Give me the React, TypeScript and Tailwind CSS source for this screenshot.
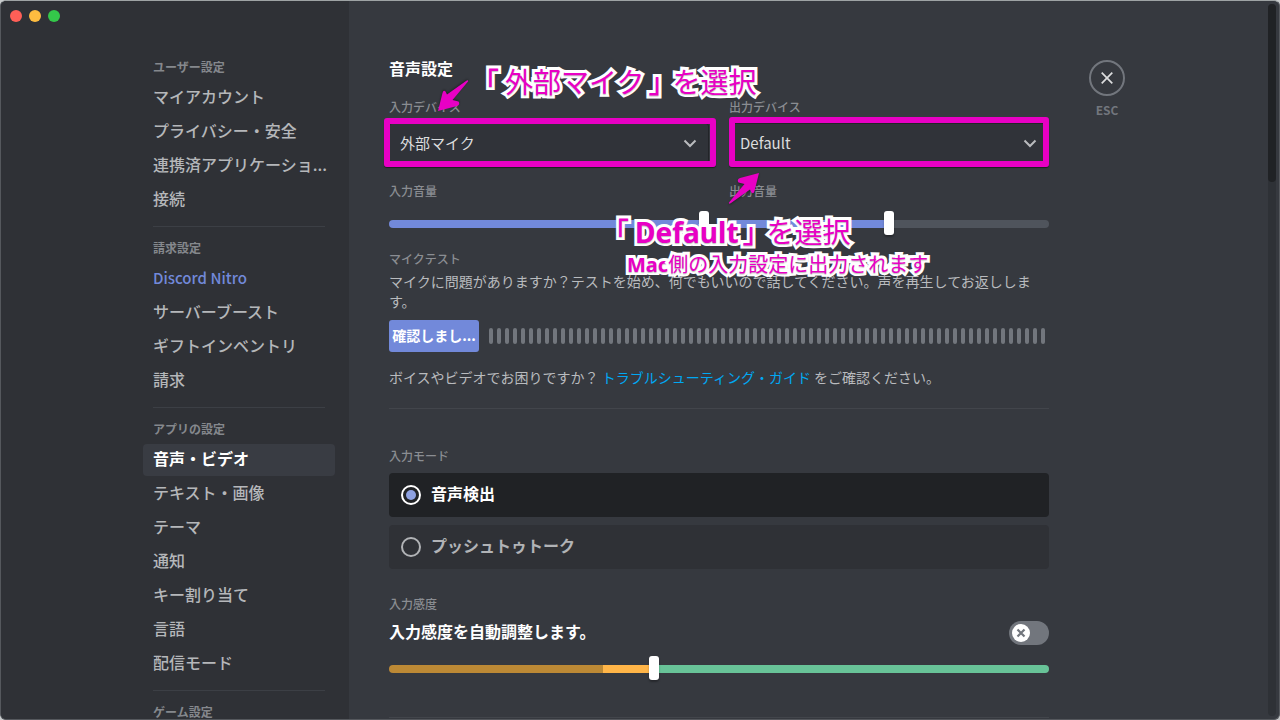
import { useState } from "react";
import type { ReactNode } from "react";

type NavItem = { label: string; accent?: boolean; active?: boolean };
type NavGroup = { title: string; items: NavItem[] };

const groups: NavGroup[] = [
  {
    title: "ユーザー設定",
    items: [
      { label: "マイアカウント" },
      { label: "プライバシー・安全" },
      { label: "連携済アプリケーショ..." },
      { label: "接続" },
    ],
  },
  {
    title: "請求設定",
    items: [
      { label: "Discord Nitro", accent: true },
      { label: "サーバーブースト" },
      { label: "ギフトインベントリ" },
      { label: "請求" },
    ],
  },
  {
    title: "アプリの設定",
    items: [
      { label: "音声・ビデオ", active: true },
      { label: "テキスト・画像" },
      { label: "テーマ" },
      { label: "通知" },
      { label: "キー割り当て" },
      { label: "言語" },
      { label: "配信モード" },
    ],
  },
  { title: "ゲーム設定", items: [] },
];

const sliderBase =
  "block h-6 w-full appearance-none bg-transparent [&::-webkit-slider-runnable-track]:h-2 [&::-webkit-slider-runnable-track]:rounded-full [&::-webkit-slider-thumb]:-mt-[9px] [&::-webkit-slider-thumb]:h-6 [&::-webkit-slider-thumb]:w-[10px] [&::-webkit-slider-thumb]:appearance-none [&::-webkit-slider-thumb]:rounded-[3px] [&::-webkit-slider-thumb]:bg-white [&::-webkit-slider-thumb]:shadow-[0_2px_2px_rgba(0,0,0,0.3)]";

const noteText =
  "pointer-events-none absolute z-20 whitespace-nowrap text-[#e800c4] [-webkit-text-stroke:6px_white] [paint-order:stroke_fill] [stroke-linejoin:round] [text-shadow:0_1px_1px_rgba(0,0,0,0.25)]";

function Label({ children, htmlFor }: { children: ReactNode; htmlFor?: string }) {
  return (
    <label htmlFor={htmlFor} className="block text-xs leading-4 font-medium text-[#8a8d92]">
      {children}
    </label>
  );
}

function Sidebar() {
  return (
    <aside className="flex shrink-0 grow basis-[218px] justify-end bg-[#2f3136]">
      <nav className="w-[206px] pt-[53px] pr-[14px]">
        {groups.map((g, i) => (
          <section key={g.title}>
            {i > 0 && <hr className="mx-[10px] mt-[10px] mb-2 border-[#3c3f45]" />}
            <h2 className="h-7 px-[10px] text-xs leading-[26px] font-bold text-[#85888d]">{g.title}</h2>
            {g.items.map((it) => (
              <a
                key={it.label}
                href="#"
                className={
                  "mb-0.5 block h-8 overflow-hidden rounded px-[10px] whitespace-nowrap " +
                  (it.active
                    ? "bg-[#393c43] text-base leading-[28px] font-bold text-white"
                    : it.accent
                      ? "text-[15px] leading-[30px] font-medium text-[#7289da]"
                      : "text-base leading-[28px] font-medium text-[#b5b7ba]")
                }
              >
                {it.label}
              </a>
            ))}
          </section>
        ))}
      </nav>
    </aside>
  );
}

function Device({ id, label, value, frame }: { id: string; label: string; value: string; frame: string }) {
  return (
    <div>
      <Label htmlFor={id}>{label}</Label>
      <div className="relative mt-2">
        <select
          id={id}
          className="block h-10 w-full appearance-none rounded-[3px] border border-[#222428] bg-[#303339] px-[10px] text-[15px] text-[#dcddde]"
        >
          <option>{value}</option>
        </select>
        <svg className="pointer-events-none absolute top-2 right-[7px] h-6 w-6" viewBox="0 0 24 24" fill="none">
          <path d="M6.500 9.500 12 15l5.500-5.500" stroke="#b9bbbe" strokeWidth="2" />
        </svg>
        <div
          className={
            "pointer-events-none absolute rounded-[3px] border-6 border-[#e800c4] shadow-[0_1px_1px_rgba(0,0,0,0.5)] " + frame
          }
        />
      </div>
    </div>
  );
}

function Arrow({ className }: { className: string }) {
  return (
    <svg
      className={
        "pointer-events-none absolute z-10 h-8 w-8 overflow-visible drop-shadow-[0_1px_1px_rgba(0,0,0,0.4)] " + className
      }
      viewBox="0 0 32 32"
    >
      <path
        d="M31 1 12 6Q8.500 7.500 10.500 10.500L16.500 12 1 30.500Q.500 32.500 3 31L22 17.500 23.500 20.500Q25.500 22.500 26.500 19Z"
        fill="#e800c4"
      />
    </svg>
  );
}

function Quoted({ children }: { children: ReactNode }) {
  return (
    <>
      <span className="mr-1.5 font-medium">「</span>
      {children}
      <span className="inline-block w-7 pl-1 font-medium">」</span>
    </>
  );
}

function ModeOption({ label, checked, onChange }: { label: string; checked: boolean; onChange: () => void }) {
  return (
    <label
      className={
        "flex h-11 items-center gap-[10px] rounded px-3 text-base leading-5 font-bold " +
        (checked ? "bg-[#202225] text-white" : "bg-[#2f3136] text-[#b1b3b6]")
      }
    >
      <span className="relative flex h-5 w-5 shrink-0">
        <input
          type="radio"
          name="mode"
          checked={checked}
          onChange={onChange}
          className="peer h-5 w-5 appearance-none rounded-full border-2 border-current"
        />
        <span className="pointer-events-none absolute inset-[5px] hidden rounded-full bg-[#8ea1e1] peer-checked:block" />
      </span>
      <span className="pb-1">{label}</span>
    </label>
  );
}

function Settings() {
  const [mode, setMode] = useState(0);
  return (
    <main className="relative min-w-0 max-w-[740px] grow px-10 pt-[57px]">
      <h1 className="text-base leading-5 font-bold text-white">音声設定</h1>
      <div className="mt-[21px] grid grid-cols-2 gap-5">
        <Device id="in-dev" label="入力デバイス" value="外部マイク" frame="-top-[5px] -right-[7px] -bottom-1 -left-[5px]" />
        <Device id="out-dev" label="出力デバイス" value="Default" frame="-top-[6px] right-0 -bottom-1 left-0" />
      </div>
      <div className="mt-5 grid grid-cols-2 gap-5">
        <div>
          <Label htmlFor="in-vol">入力音量</Label>
          <input
            id="in-vol"
            type="range"
            defaultValue={100}
            className={sliderBase + " mt-[13px] [&::-webkit-slider-runnable-track]:bg-[#7289da]"}
          />
        </div>
        <div>
          <Label htmlFor="out-vol">出力音量</Label>
          <input
            id="out-vol"
            type="range"
            defaultValue={50}
            className={
              sliderBase +
              " mt-[13px] [&::-webkit-slider-runnable-track]:bg-[linear-gradient(to_right,#7289da_50%,#4f545c_50%)]"
            }
          />
        </div>
      </div>
      <div className="mt-[15px]">
        <Label>マイクテスト</Label>
        <p className="mt-1 text-sm leading-5 text-[#b9bbbe]">
          マイクに問題がありますか？テストを始め、何でもいいので話してください。声を再生してお返しします。
        </p>
      </div>
      <div className="mt-[9px] flex items-center gap-[10px]">
        <button className="h-8 w-[90px] shrink-0 rounded-[3px] bg-[#7289da] pb-0.5 text-sm font-bold whitespace-nowrap text-white">
          確認しまし...
        </button>
        <div className="flex h-4 min-w-0 grow gap-1 overflow-hidden">
          {Array.from({ length: 70 }, (_, i) => (
            <span key={i} className="h-4 w-1 shrink-0 rounded-[2px] bg-[#72767d]" />
          ))}
        </div>
      </div>
      <p className="mt-[15px] text-sm leading-5 text-[#b9bbbe]">
        ボイスやビデオでお困りですか？{" "}
        <a href="#" className="text-[#00a8f3]">
          トラブルシューティング・ガイド
        </a>{" "}
        をご確認ください。
      </p>
      <hr className="mt-[21px] border-[#42454b]" />
      <fieldset className="mt-[39px]">
        <legend className="text-xs leading-4 font-medium text-[#8a8d92]">入力モード</legend>
        <div className="mt-[9px] flex flex-col gap-2">
          <ModeOption label="音声検出" checked={mode === 0} onChange={() => setMode(0)} />
          <ModeOption label="プッシュトゥトーク" checked={mode === 1} onChange={() => setMode(1)} />
        </div>
      </fieldset>
      <div className="mt-[27px]">
        <Label htmlFor="sens">入力感度</Label>
        <div className="mt-[9px] flex h-6 items-center justify-between">
          <label htmlFor="auto" className="pb-1 text-base leading-5 font-bold text-white">
            入力感度を自動調整します。
          </label>
          <span className="relative block h-6 w-10">
            <input
              id="auto"
              type="checkbox"
              role="switch"
              className="block h-6 w-10 appearance-none rounded-full bg-[#72767d]"
            />
            <svg className="pointer-events-none absolute top-[3px] left-[3px] h-[18px] w-[18px]" viewBox="0 0 18 18">
              <circle cx="9" cy="9" r="9" fill="#fff" />
              <path d="m5.500 5.500 7 7m0-7-7 7" stroke="#72767d" strokeWidth="2.200" />
            </svg>
          </span>
        </div>
        <input
          id="sens"
          type="range"
          defaultValue={40}
          className={
            sliderBase +
            " mt-3 [&::-webkit-slider-runnable-track]:bg-[linear-gradient(to_right,#bc8935_32.4%,#ffb548_32.4%,#ffb548_40%,#68c398_40%)]"
          }
        />
      </div>
      <hr className="mt-9 border-[#42454b]" />

      <div className={noteText + " top-[60px] left-[122px] text-[28px] leading-10"}>
        <Quoted>外部マイク</Quoted>を選択
      </div>
      <Arrow className="top-[79px] left-[88px] rotate-180" />
      <Arrow className="top-[171px] left-[379px]" />
      <div className={noteText + " top-[210px] left-[252px] text-[28px] leading-10"}>
        <Quoted>
          <span className="font-['Noto_Sans'] font-bold">Default</span>
        </Quoted>
        を選択
      </div>
      <div className={noteText + " top-[248px] left-[278px] text-xl leading-[30px]"}>
        <span className="font-['Noto_Sans'] font-bold">Mac</span>側の入力設定に出力されます
      </div>
    </main>
  );
}

export default function App() {
  return (
    <div className="h-screen bg-[#c9cccd]">
      <div
        lang="ja"
        className="relative flex h-full overflow-hidden rounded-md border border-[#55585d] border-t-[#9ea3a4] bg-[#36393f] font-['Noto_Sans_CJK_JP',sans-serif]"
      >
        <div className="absolute top-[9px] left-[9px] flex gap-[7px]">
          <button aria-label="閉じる" className="h-3 w-3 rounded-full bg-[#ff5f57]" />
          <button aria-label="しまう" className="h-3 w-3 rounded-full bg-[#febc40]" />
          <button aria-label="拡大" className="h-3 w-3 rounded-full bg-[#34c84a]" />
        </div>
        <Sidebar />
        <div className="flex min-w-0 grow basis-[800px]">
          <Settings />
          <div className="flex w-9 shrink-0 flex-col items-center pt-[59px]">
            <button
              aria-label="閉じる"
              className="flex h-9 w-9 items-center justify-center rounded-full border-2 border-[#72767d]"
            >
              <svg className="h-3 w-3" viewBox="0 0 12 12">
                <path d="m.700.700 10.600 10.600m0-10.600L.700 11.300" stroke="#dcddde" strokeWidth="1.700" />
              </svg>
            </button>
            <span className="mt-1.5 text-xs leading-4 font-bold text-[#72767d]">ESC</span>
          </div>
          <div className="my-[3px] mr-[3px] ml-auto w-2 shrink-0 rounded-full bg-[#2e3136]">
            <div className="h-1/4 rounded-full bg-[#202225]" />
          </div>
        </div>
      </div>
    </div>
  );
}
